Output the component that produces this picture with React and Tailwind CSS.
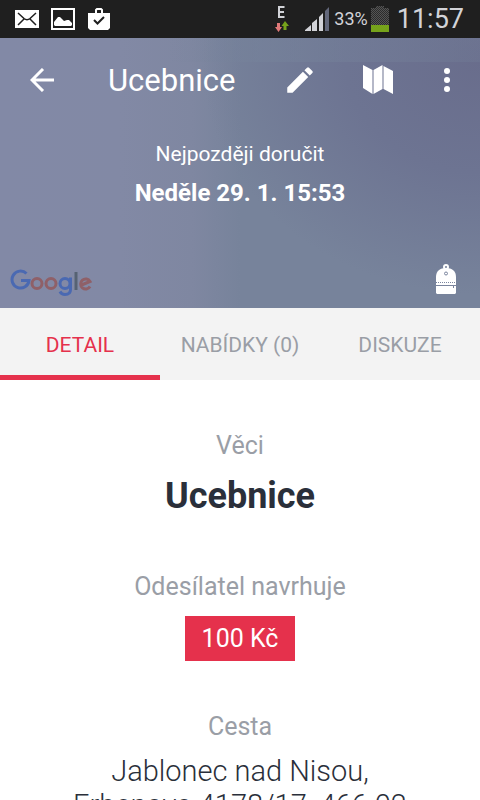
import React from "react";

const tabs = [
  { label: "DETAIL", active: true },
  { label: "NABÍDKY (0)", active: false },
  { label: "DISKUZE", active: false },
];

function StatusBar() {
  return (
    <div className="flex h-[38px] shrink-0 items-center justify-between bg-[#1f1f1f] pl-[15px] pr-4">
      <div className="flex items-center gap-3">
        <svg className="h-[18px] w-6" viewBox="0 0 24 18" aria-label="Mail">
          <rect width="24" height="18" fill="#fff" />
          <path d="M3 3l6 5.500q3 2.500 6 0L21 3M3 15l6-6M21 15l-6-6" fill="none" stroke="#1f1f1f" strokeWidth="1.500" />
        </svg>
        <svg className="h-[22px] w-6" viewBox="0 0 24 22" aria-label="Picture">
          <rect x="1" y="1" width="22" height="20" fill="none" stroke="#fff" strokeWidth="2" />
          <path d="M3 17v-3l4-5 2 0 4 4 3-1 2 0 3 3v2l-1 1H4z" fill="#fff" />
        </svg>
        <svg className="h-6 w-6" viewBox="0 0 24 24" aria-label="Store">
          <path d="M9 6V3l1-1h4l1 1v3" fill="none" stroke="#fff" strokeWidth="2" />
          <path d="M1 6h22v15l-2 2H3l-2-2z" fill="#fff" />
          <path d="M7 13l3.500 3.500L17 10" fill="none" stroke="#1f1f1f" strokeWidth="2" />
        </svg>
      </div>
      <div className="flex items-center text-[#d2d3d8]">
        <svg className="mr-4 h-[26px] w-[14px]" viewBox="0 0 14 26" aria-label="Edge data">
          <path d="M9.500 1H4v10h5.500M4 6h5" fill="none" stroke="#d2d3d8" strokeWidth="2" />
          <path d="M2 17h3v4h2l-3.500 5L0 21h2z" fill="#e07878" />
          <path d="M8.500 24h3v-4H14l-4-5-3.500 5h2z" fill="#76a31b" />
        </svg>
        <svg className="mr-[5px] h-6 w-6" viewBox="0 0 24 24" aria-label="Signal">
          <path d="M0 24v-1l6-5v6zM7 24v-8l5-4v12zM14 24V10l4-4v18z" fill="#d2d3d8" />
          <path d="M20 24V4l4-4v24z" fill="#62677a" />
        </svg>
        <span className="text-[18px] leading-6">33%</span>
        <svg className="ml-[3px] mr-2 h-[26px] w-[18px]" viewBox="0 0 18 26" aria-label="Battery">
          <defs>
            <pattern id="mesh" width="2" height="2" patternUnits="userSpaceOnUse">
              <rect width="2" height="2" fill="#2c2c2c" />
              <path d="M0 0h1v1H0zM1 1h1v1H1z" fill="#555" />
            </pattern>
          </defs>
          <path d="M0 2h5V0h8v2h5v17H0z" fill="url(#mesh)" />
          <path d="M0 19h18v7H0z" fill="#76a31b" />
        </svg>
        <span className="text-[27px] leading-8">11:57</span>
      </div>
    </div>
  );
}

function GoogleLogo() {
  return (
    <svg className="h-[30px] w-[84px]" viewBox="0 0 84 30" fill="none" strokeWidth="3" role="img" aria-label="Google">
      <path d="M16.500 5.500A8.500 8.500 0 1 0 19 12.500H11" stroke="#4a69b2" />
      <circle cx="27" cy="15.500" r="5" stroke="#8f6068" />
      <circle cx="41" cy="15.500" r="5" stroke="#8f6068" />
      <circle cx="55" cy="15.500" r="5" stroke="#4a69b2" />
      <path d="M60.500 9.500v12q0 5-5.500 5q-3.500 0-5-3" stroke="#4a69b2" />
      <path d="M66 4v18" stroke="#566273" />
      <path d="M71.500 17l8.500-3.500A5 5 0 1 0 80 18.500" stroke="#8f6068" />
    </svg>
  );
}

function Hero() {
  return (
    <header className="flex h-[270px] shrink-0 flex-col bg-[radial-gradient(ellipse_100%_150%_at_100%_8%,#696d8c_0%,#6d7492_28%,#77839b00_58%),linear-gradient(90deg,#8289a6_0%,#8289a5_25%,#7f87a1_40%,#77839b_50%,#77839b_100%)] text-white">
      <div className="flex h-[84px] shrink-0 items-center bg-[linear-gradient(90deg,transparent_35%,#76839b80_55%,#76839b40_100%)] bg-[length:100%_24px] bg-no-repeat pl-6 pr-[21px]">
        <button aria-label="Zpět" className="flex h-9 w-9 items-center justify-center">
          <svg className="h-6 w-6" viewBox="0 0 24 24" fill="none" stroke="#fff" strokeWidth="3">
            <path d="M13 1L2 12l11 11M2 12h22" />
          </svg>
        </button>
        <h1 className="ml-12 flex-1 pt-px text-[31px] leading-9">Ucebnice</h1>
        <button aria-label="Upravit" className="mr-[45px] flex h-9 w-9 items-center justify-center">
          <svg className="h-[34px] w-[34px]" viewBox="0 0 24 24" fill="#fff">
            <path d="M3 17.250V21h3.750L17.810 9.940l-3.750-3.750L3 17.250zM20.710 7.040a1 1 0 0 0 0-1.410l-2.340-2.340a1 1 0 0 0-1.410 0l-1.830 1.830 3.750 3.750 1.830-1.830z" />
          </svg>
        </button>
        <button aria-label="Mapa" className="mr-[42px] flex h-9 w-[30px] items-center justify-center">
          <svg className="h-[30px] w-[30px]" viewBox="0 0 30 30" fill="#fff">
            <path d="M0 0l9.500 5v24L0 23zM10.500 5l9-5v24l-9 5zM20.500 1l9.500 5v23l-9.500-5z" />
          </svg>
        </button>
        <button aria-label="Další možnosti" className="flex h-9 w-6 items-center justify-center">
          <svg className="h-6 w-6" viewBox="0 0 24 24" fill="#fff">
            <circle cx="12" cy="3" r="3" />
            <circle cx="12" cy="12" r="3" />
            <circle cx="12" cy="21" r="3" />
          </svg>
        </button>
      </div>
      <div className="pt-4 text-center">
        <p className="text-[21px] leading-8">Nejpozději doručit</p>
        <p className="mt-[3px] text-[24px] font-bold leading-10">Neděle 29. 1. 15:53</p>
      </div>
      <div className="mt-auto flex items-end justify-between pb-[10px] pl-[10px] pr-6">
        <GoogleLogo />
        <svg className="mb-1 h-[30px] w-5" viewBox="0 0 20 30" role="img" aria-label="Batoh">
          <circle cx="10" cy="3" r="2" fill="none" stroke="#fff" strokeWidth="2" />
          <path d="M0 29V13C0 7 4 4 10 4s10 3 10 9v16l-1 1H1z" fill="#fff" />
          <circle cx="10" cy="9.500" r="1.500" fill="none" stroke="#7a849d" />
          <path d="M0 21.500h20M17.500 22v2" stroke="#7a849d" />
          <path d="M0 18.500h20" stroke="#7a849d" strokeDasharray="1 1" />
        </svg>
      </div>
    </header>
  );
}

export default function App() {
  return (
    <div className="flex h-screen flex-col overflow-hidden bg-white font-['Roboto',sans-serif]">
      <StatusBar />
      <Hero />
      <nav className="grid h-[72px] shrink-0 grid-cols-3 bg-[#f3f3f3]">
        {tabs.map((tab) => (
          <button
            key={tab.label}
            className={
              tab.active
                ? "border-b-5 border-[#e5314c] pt-2 text-[21px] text-[#e5314c]"
                : "border-b-5 border-transparent pt-2 text-[21px] text-[#9a9ea6]"
            }
          >
            {tab.label}
          </button>
        ))}
      </nav>
      <main className="min-h-0 flex-1 overflow-y-auto px-10 pt-[50px] text-center text-[#2a2f3a] [scrollbar-width:none]">
        <section>
          <h2 className="text-[25px] leading-8 text-[#9a9ea6]">Věci</h2>
          <p className="mt-2 text-[36px] font-bold leading-[52px]">Ucebnice</p>
        </section>
        <section className="mt-[49px]">
          <h2 className="text-[25px] leading-8 text-[#9a9ea6]">Odesílatel navrhuje</h2>
          <p className="mx-auto mt-[13px] w-fit bg-[#e5314c] px-[17px] pt-px text-[25px] leading-[44px] text-white">100 Kč</p>
        </section>
        <section className="mt-[50px]">
          <h2 className="text-[25px] leading-8 text-[#9a9ea6]">Cesta</h2>
          <address className="mt-[11px] text-[29px] font-light not-italic leading-[34px]">
            Jablonec nad Nisou,
            <br />
            Erbenova 4178/17, 466 02
          </address>
        </section>
      </main>
    </div>
  );
}
